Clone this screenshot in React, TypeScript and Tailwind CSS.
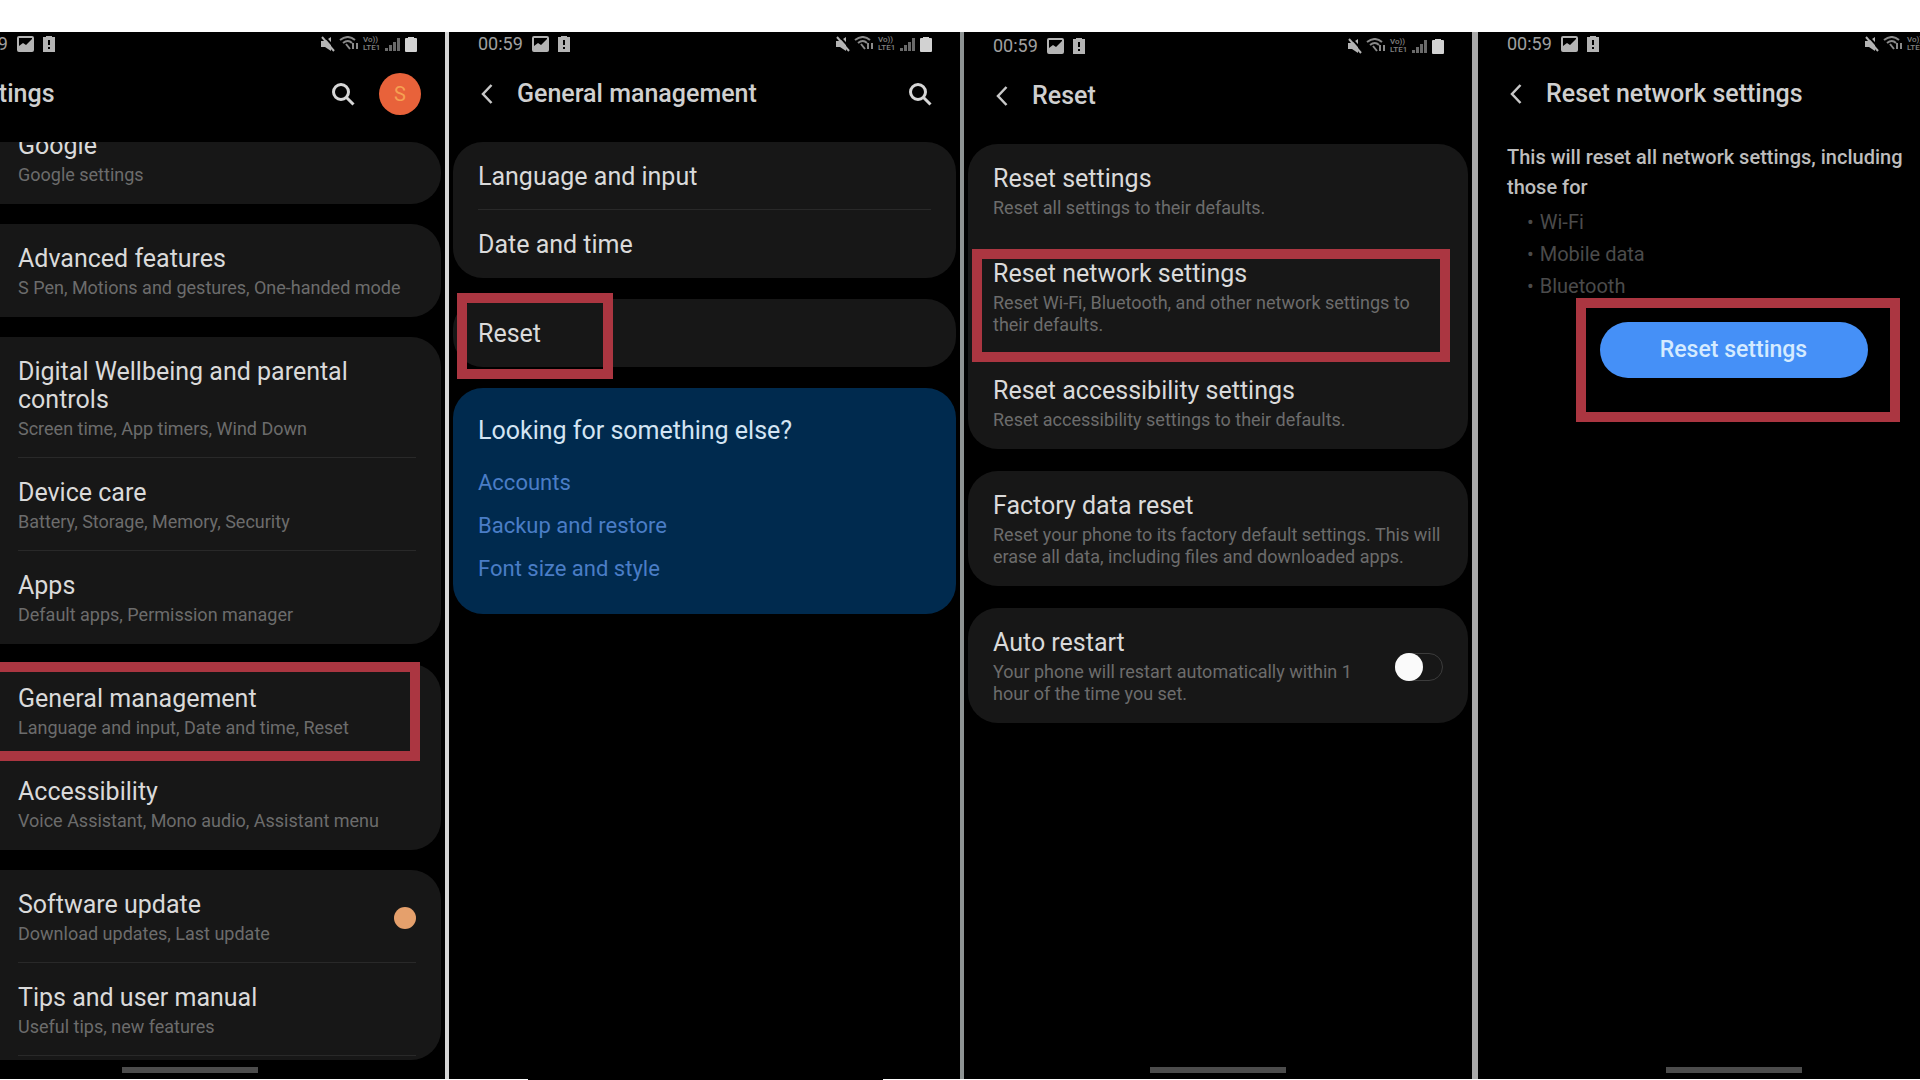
import * as React from "react";
import clsx from "clsx";

interface RowProps {
  title: string;
  description?: string;
  highlight?: string;
  children?: React.ReactNode;
}

function StatusBar() {
  return (
    <div className="flex h-6 shrink-0 items-center justify-between pr-7 pl-[29px] text-[#b4b4b4]">
      <div className="flex items-center gap-2">
        <span className="w-[46px] text-lg leading-6 whitespace-nowrap text-[#a0a0a0]">00:59</span>
        <svg className="h-4 w-[17px]" viewBox="0 0 17 16" fill="currentColor" aria-hidden="true">
          <path fillRule="evenodd" d="M2 0h13a2 2 0 0 1 2 2v12a2 2 0 0 1-2 2H2a2 2 0 0 1-2-2V2a2 2 0 0 1 2-2Zm0 2v8l4-3 3 2 6-6V2H2Z" />
        </svg>
        <svg className="h-4 w-[14px]" viewBox="0 0 14 16" fill="currentColor" aria-hidden="true">
          <path fillRule="evenodd" d="M1 1h3V0h6v1h3v15H1V1Zm5 3v5h2V4H6Zm0 7v2h2v-2H6Z" />
        </svg>
      </div>
      <div className="flex items-center gap-1">
        <svg className="h-4 w-[14px]" viewBox="0 0 14 16" fill="currentColor" aria-hidden="true">
          <path d="M0 5h4l6-4v14l-6-4H0z" />
          <path d="M3 0l11 12" stroke="#000" strokeWidth="2" />
          <path d="M1 1l12 14" stroke="currentColor" strokeWidth="2" />
        </svg>
        <svg className="h-4 w-5" viewBox="0 0 20 16" fill="none" stroke="#8a8a8a" aria-hidden="true">
          <path d="M1 4q8-6 15 0M4 7q5-4 9 0" strokeWidth="2" />
          <path d="M7 8l4 5M14 7v6M18 7v6" strokeWidth="2" />
        </svg>
        <span className="w-[18px] text-[8px] leading-[8px] font-medium text-[#808080]">
          Vo))<br />LTE1
        </span>
        <svg className="h-4 w-4" viewBox="0 0 16 16" fill="#6a6a6a" aria-hidden="true">
          <path d="M0 12h3v3H0zM4 9h3v6H4zM8 6h3v9H8zM12 2h3v13h-3z" />
        </svg>
        <svg className="h-[15px] w-3" viewBox="0 0 12 15" fill="#d2d2d2" aria-hidden="true">
          <path d="M3 0h6v1h2a1 1 0 0 1 1 1v12a1 1 0 0 1-1 1H1a1 1 0 0 1-1-1V2a1 1 0 0 1 1-1h2z" />
        </svg>
      </div>
    </div>
  );
}

function SearchButton() {
  return (
    <button type="button" aria-label="Search" className="text-[#d6d6d6]">
      <svg className="h-6 w-6" viewBox="0 0 24 24" fill="none" stroke="currentColor" strokeWidth="3" aria-hidden="true">
        <circle cx="10" cy="10" r="7.5" />
        <path d="M15.5 15.5l7 7" />
      </svg>
    </button>
  );
}

function Header({ title, back = true, children }: { title: string; back?: boolean; children?: React.ReactNode }) {
  return (
    <header className="flex h-19 shrink-0 items-center pr-7 pl-8">
      {back && (
        <button type="button" aria-label="Back" className="mr-6 text-[#c8c8c8]">
          <svg className="h-5 w-3" viewBox="0 0 12 20" fill="none" stroke="currentColor" strokeWidth="2.5" aria-hidden="true">
            <path d="M10.500 1L2 10l8.500 9" />
          </svg>
        </button>
      )}
      <h1 className={clsx("text-[25px] leading-8 font-medium text-[#cfcfcf]", !back && "-ml-1")}>{title}</h1>
      <div className="ml-auto flex items-center gap-6">{children}</div>
    </header>
  );
}

function Card({ className, children }: { className?: string; children: React.ReactNode }) {
  return <section className={clsx("rounded-[30px] bg-[#171717]", className)}>{children}</section>;
}

// Red frame laid over the control to tap next
function Highlight({ className }: { className: string }) {
  return <span className={clsx("pointer-events-none absolute z-10 border-[10px] border-[#ab3641]", className)} />;
}

function Row({ title, description, highlight, children }: RowProps) {
  return (
    <button type="button" className="relative block w-full px-[25px] text-left">
      <span className={clsx("flex items-center justify-between pt-[21px]", description ? "pb-[18px]" : "pb-[19px]")}>
        <span className="block">
          <span className="block text-[25px] leading-7 text-[#dadada]">{title}</span>
          {description && <span className="mt-1 block text-lg leading-[22px] text-[#6c6c6c]">{description}</span>}
        </span>
        {children}
      </span>
      {highlight && <Highlight className={highlight} />}
    </button>
  );
}

function Divider() {
  return <div className="mx-[25px] -mt-px h-px bg-[#292929]" />;
}

function HomeBar() {
  return <div className="mx-auto mt-auto mb-1.5 h-1.5 w-[136px] shrink-0 bg-[#4c4c4c]" />;
}

function SettingsScreen() {
  return (
    <div className="-ml-[66px] flex flex-1 flex-col">
      <StatusBar />
      <Header title="Settings" back={false}>
        <SearchButton />
        <button type="button" aria-label="Account" className="-mr-1 flex size-[42px] items-center justify-center rounded-full bg-[#e8623a] text-xl text-[#f5a052]">
          S
        </button>
      </Header>
      <main className="flex flex-col gap-5 pt-2.5 pr-1 pl-[59px]">
        <Card className="flex h-[62px] flex-col justify-end overflow-hidden rounded-l-none">
          <Row title="Google" description="Google settings" />
        </Card>
        <Card className="rounded-l-none">
          <Row title="Advanced features" description="S Pen, Motions and gestures, One-handed mode" />
        </Card>
        <Card className="rounded-l-none">
          <Row title="Digital Wellbeing and parental controls" description="Screen time, App timers, Wind Down" />
          <Divider />
          <Row title="Device care" description="Battery, Storage, Memory, Security" />
          <Divider />
          <Row title="Apps" description="Default apps, Permission manager" />
        </Card>
        <Card className="rounded-l-none">
          <Row title="General management" description="Language and input, Date and time, Reset" highlight="-top-0.5 -bottom-1 -left-3 right-[21px]" />
          <Row title="Accessibility" description="Voice Assistant, Mono audio, Assistant menu" />
        </Card>
        <Card className="rounded-l-none pb-1">
          <Row title="Software update" description="Download updates, Last update">
            <span className="size-[22px] rounded-full bg-[#e5a06c]" />
          </Row>
          <Divider />
          <Row title="Tips and user manual" description="Useful tips, new features" />
          <Divider />
        </Card>
      </main>
      <HomeBar />
    </div>
  );
}

function GeneralScreen() {
  const links = ["Accounts", "Backup and restore", "Font size and style"];

  return (
    <div className="flex flex-1 flex-col">
      <StatusBar />
      <Header title="General management">
        <SearchButton />
      </Header>
      <main className="flex flex-col gap-[21px] px-1 pt-2.5">
        <Card>
          <Row title="Language and input" />
          <Divider />
          <Row title="Date and time" />
        </Card>
        <Card>
          <Row title="Reset" highlight="-top-1.5 -bottom-3 left-1 w-[156px]" />
        </Card>
        <section className="rounded-[30px] bg-[#002a4e] px-[25px] pt-[29px] pb-6">
          <h2 className="text-[25px] leading-7 text-[#d3e4f3]">Looking for something else?</h2>
          <ul className="mt-4">
            {links.map((link) => (
              <li key={link} className="text-[22px] leading-[43px] text-[#4a7dc6]">
                <a href="#">{link}</a>
              </li>
            ))}
          </ul>
        </section>
      </main>
    </div>
  );
}

function ResetScreen() {
  return (
    <div className="flex flex-1 flex-col pt-0.5">
      <StatusBar />
      <Header title="Reset" />
      <main className="flex flex-col gap-[22px] px-1 pt-2.5">
        <Card className="flex flex-col gap-0.5">
          <Row title="Reset settings" description="Reset all settings to their defaults." />
          <Row
            title="Reset network settings"
            description="Reset Wi-Fi, Bluetooth, and other network settings to their defaults."
            highlight="top-2.5 -bottom-2 left-1 right-[18px]"
          />
          <Row title="Reset accessibility settings" description="Reset accessibility settings to their defaults." />
        </Card>
        <Card>
          <Row title="Factory data reset" description="Reset your phone to its factory default settings. This will erase all data, including files and downloaded apps." />
        </Card>
        <Card>
          <label className="flex items-center justify-between gap-6 px-[25px] pt-[21px] pb-[18px]">
            <span className="block">
              <span className="block text-[25px] leading-7 text-[#dadada]">Auto restart</span>
              <span className="mt-1 block text-lg leading-[22px] text-[#6c6c6c]">
                Your phone will restart automatically within 1 hour of the time you set.
              </span>
            </span>
            <input
              type="checkbox"
              role="switch"
              className="flex h-7 w-12 shrink-0 appearance-none items-center rounded-full border border-[#3c3c3c] before:-ml-px before:size-7 before:rounded-full before:bg-[#fafafa] checked:justify-end"
            />
          </label>
        </Card>
      </main>
      <HomeBar />
    </div>
  );
}

function ResetNetworkScreen() {
  const items = ["Wi-Fi", "Mobile data", "Bluetooth"];

  return (
    <div className="-mr-[69px] flex flex-1 flex-col">
      <StatusBar />
      <Header title="Reset network settings" />
      <main className="flex flex-col pt-2.5 pr-[60px] pl-[29px]">
        <p className="text-xl leading-[30px] font-medium text-[#bdbdbd]">This will reset all network settings, including those for</p>
        <ul className="mt-1 pl-5">
          {items.map((item) => (
            <li key={item} className="flex gap-1.5 text-xl leading-8 text-[#4b4b4b]">
              <span>•</span>
              {item}
            </li>
          ))}
        </ul>
      </main>
      <div className="relative mx-auto mt-5 w-[268px]">
        <button type="button" className="h-14 w-full rounded-full bg-[#4590f7] text-[23px] font-medium text-[#d5ebff]">
          Reset settings
        </button>
        <Highlight className="-top-6 -right-8 -bottom-11 -left-6" />
      </div>
      <HomeBar />
    </div>
  );
}

export default function App() {
  return (
    <div className="flex min-h-screen flex-col bg-white pt-8 pb-px font-[Roboto,sans-serif]">
      <div className="grid flex-1 grid-cols-[445fr_515fr_512fr_448fr] bg-black">
        <div className="flex min-w-0 flex-col overflow-hidden">
          <SettingsScreen />
        </div>
        <div className="relative flex min-w-0 flex-col border-l-4 border-[#d6d6d6]">
          <GeneralScreen />
          <div className="absolute right-[77px] -bottom-px left-[79px] h-px bg-black" />
        </div>
        <div className="flex min-w-0 flex-col border-l-4 border-[#8e9393]">
          <ResetScreen />
        </div>
        <div className="flex min-w-0 flex-col overflow-hidden border-l-6 border-[#a9a9a9]">
          <ResetNetworkScreen />
        </div>
      </div>
    </div>
  );
}
